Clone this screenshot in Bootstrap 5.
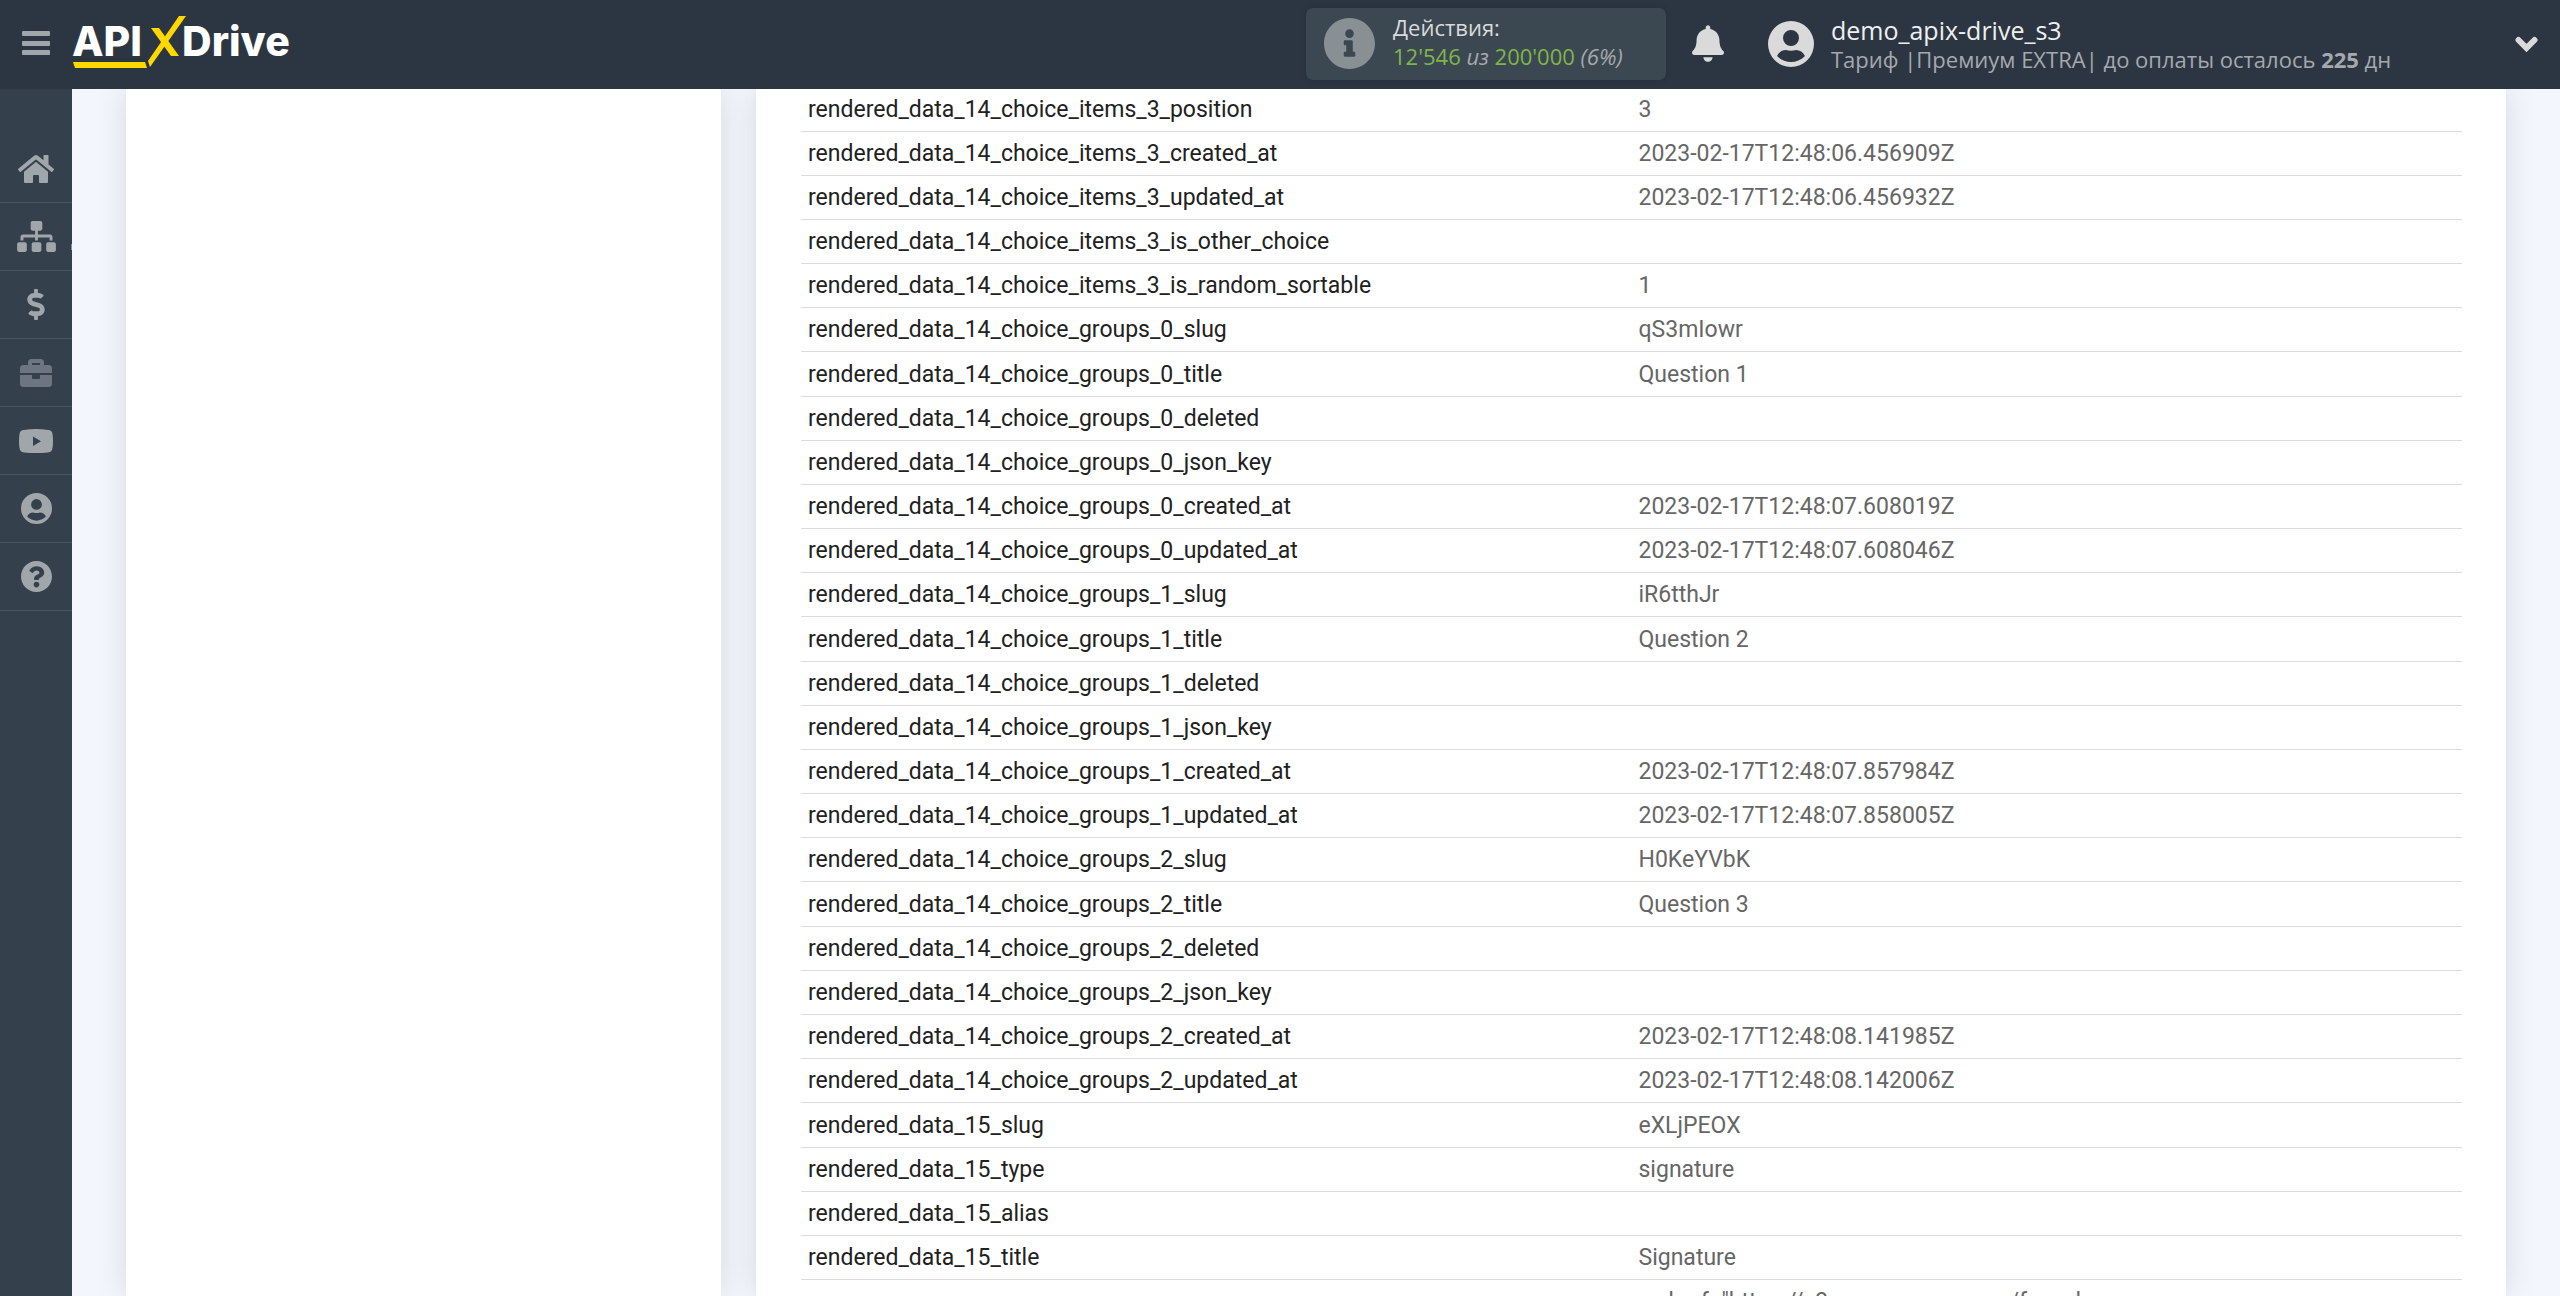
<!DOCTYPE html>
<html lang="ru">
<head>
<meta charset="utf-8">
<meta name="viewport" content="width=device-width, initial-scale=1">
<title>ApiX-Drive</title>
<link rel="stylesheet" href="https://cdn.jsdelivr.net/npm/bootstrap@5.3.0/dist/css/bootstrap.min.css">
<style>
  body { background: #f3f6fc; font-family: Roboto, "Liberation Sans", sans-serif; }
  svg { display: block; fill: currentColor; }

  /* top bar */
  .topbar { height: 89px; padding: 0 22px 2px; background: #2c3642; font-family: "Open Sans", "Noto Sans", sans-serif; color: #dadada; }
  .menu-toggle { color: #a1a6aa; }
  .brand-logo { margin-left: 22px; }
  .brand-logo text { font: 800 41px Inter, "Open Sans", sans-serif; fill: #fff; }
  .quota { width: 360px; height: 72px; padding: 0 18px; gap: 18px; border-radius: 7px; background: #3b4851; box-shadow: 0 0 6px rgba(0, 0, 0, .15); }
  .quota-icon { color: #889093; }
  .line-one, .line-two { font-size: 22px; line-height: 29px; white-space: nowrap; }
  .line-two { color: #a5a9ad; }
  .line-two .num { color: #7fb54c; font-style: normal; }
  .bell-btn { margin: 0 44px 0 26px; color: #dadada; }
  .account { width: 770px; gap: 17px; color: #dadada; text-align: left; }
  .account-name { font-size: 25px; line-height: 30px; color: #efefef; }
  .account .line-two { line-height: 28px; }

  /* side menu */
  .sidebar { width: 72px; padding-top: 46px; background: #35404d; }
  .side-link { height: 68px; border-bottom: 1px solid #4a5560; color: #a1a6aa; position: relative; }
  .side-link.is-muted { color: #6d7680; }
  .has-submenu::after { content: ""; position: absolute; right: 0; top: 41px; width: 1px; height: 6px; background: #8b929a; }

  /* content */
  .content { padding: 0 54px; gap: 35px; }
  .panel { background: #fff; box-shadow: 0 0 30px rgba(0, 0, 0, .12); }
  .panel-side { flex: 0 0 25%; }
  .panel-main { padding: 0 44px 0 45px; }
  .data-rows { table-layout: fixed; border-collapse: separate; border-spacing: 0; font-size: 23px; line-height: 28px; }
  .data-rows th, .data-rows td { padding: 8px 7px 7px; border-bottom: 1px solid #dcdcdc; font-weight: 400; text-align: left; vertical-align: top; white-space: nowrap; }
  .data-rows th { color: #212121; }
  .data-rows td { color: #666; }
  .data-rows tr { height: 44px; }
  .data-rows tr.lead-row { height: 45px; }
  .data-rows tr.lead-row > * { padding-top: 9px; }
  .data-rows tr:first-child { height: 43px; }
  .data-rows tr:first-child > * { padding-top: 7px; }
</style>
<script src="https://cdn.jsdelivr.net/npm/bootstrap@5.3.0/dist/js/bootstrap.bundle.min.js"></script>
</head>
<body>
<div class="vh-100 d-flex flex-column overflow-hidden">

  <header class="topbar d-flex align-items-center flex-shrink-0">
    <button class="menu-toggle btn p-0 border-0" type="button" aria-label="Меню">
      <svg width="28" height="28" viewBox="0 0 28 28"><rect y="1" width="28" height="5" rx="1"/><rect y="11" width="28" height="5" rx="1"/><rect y="20" width="28" height="5" rx="1"/></svg>
    </button>
    <a class="brand-logo" href="#" aria-label="APIXDrive">
      <svg width="226" height="60" viewBox="0 0 226 60">
        <text x="0" y="42">API</text>
        <text x="110" y="42">Drive</text>
        <g fill="#ffd800"><path d="M1 48h72l2 6H3z"/><path d="M107 2h7L78 53l-2-6z"/><path d="M79 14h8l20 28h-8z"/></g>
      </svg>
    </a>

    <div class="quota d-flex align-items-center ms-auto">
      <svg class="quota-icon" width="51" height="51" viewBox="8 8 496 496"><path d="M256 8C119.043 8 8 119.083 8 256c0 136.997 111.043 248 248 248s248-111.003 248-248C504 119.083 392.957 8 256 8zm0 110c23.196 0 42 18.804 42 42s-18.804 42-42 42-42-18.804-42-42 18.804-42 42-42zm56 254c0 6.627-5.373 12-12 12h-88c-6.627 0-12-5.373-12-12v-24c0-6.627 5.373-12 12-12h12v-64h-12c-6.627 0-12-5.373-12-12v-24c0-6.627 5.373-12 12-12h64c6.627 0 12 5.373 12 12v100h12c6.627 0 12 5.373 12 12v24z"/></svg>
      <div class="pb-1">
        <div class="line-one">Действия:</div>
        <div class="line-two fst-italic"><span class="num">12'546</span> из <span class="num">200'000</span> (6%)</div>
      </div>
    </div>
    <button class="bell-btn btn p-0 border-0" type="button" aria-label="Уведомления">
      <svg width="32" height="37" viewBox="0 0 448 512"><path d="M224 512c35.32 0 63.97-28.65 63.97-64H160.03c0 35.35 28.65 64 63.97 64zm215.39-149.71c-19.32-20.76-55.47-51.99-55.47-154.29 0-77.7-54.48-139.9-127.94-155.16V32c0-17.67-14.32-32-31.98-32s-31.98 14.33-31.98 32v20.84C118.56 68.1 64.08 130.3 64.08 208c0 102.3-36.15 133.53-55.47 154.29-6 6.45-8.66 14.16-8.61 21.71.11 16.4 12.98 32 32.1 32h383.8c19.12 0 32-15.6 32.1-32 .05-7.55-2.61-15.27-8.61-21.71z"/></svg>
    </button>
    <button class="account btn p-0 border-0 rounded-0 d-flex align-items-center" type="button">
      <svg width="46" height="46" viewBox="0 0 46 46"><path fill-rule="evenodd" d="M23 0a23 23 0 1 1 0 46a23 23 0 1 1 0-46zM23 9a8 8 0 1 0 0 16a8 8 0 1 0 0-16zM9 35C13 39 18 41 23 41S33 39 37 35C35 31 32 29 28 29C25 30 21 30 18 29C14 29 11 31 9 35z"/></svg>
      <span class="flex-grow-1">
        <span class="account-name d-block">demo_apix-drive_s3</span>
        <span class="line-two d-block">Тариф |Премиум EXTRA| до оплаты осталось <b>225</b> дн</span>
      </span>
      <svg width="23" height="16" viewBox="0 0 23 16"><path d="M3.500 4l8 8 8-8" fill="none" stroke="currentColor" stroke-width="6" stroke-linecap="round"/></svg>
    </button>
  </header>

  <div class="d-flex flex-grow-1 overflow-hidden">
    <nav class="sidebar flex-shrink-0 d-flex flex-column" aria-label="Разделы">
      <a class="side-link d-flex align-items-center justify-content-center" href="#" aria-label="Главная">
        <svg width="36" height="32" viewBox="0 0 576 512"><path d="M280.370 148.260L96 300.110V464a16 16 0 0 0 16 16l112.060-.29a16 16 0 0 0 15.920-16V368a16 16 0 0 1 16-16h64a16 16 0 0 1 16 16v95.640a16 16 0 0 0 16 16.050L464 480a16 16 0 0 0 16-16V300L295.670 148.260a12.190 12.190 0 0 0-15.300 0zM571.600 251.470L488 182.560V44.050a12 12 0 0 0-12-12h-56a12 12 0 0 0-12 12v72.610L318.470 43a48 48 0 0 0-61 0L4.340 251.470a12 12 0 0 0-1.600 16.900l25.500 31A12 12 0 0 0 45.150 301l235.220-193.740a12.190 12.190 0 0 1 15.300 0L530.900 301a12 12 0 0 0 16.900-1.600l25.500-31a12 12 0 0 0-1.700-16.930z"/></svg>
      </a>
      <a class="side-link has-submenu d-flex align-items-center justify-content-center" href="#" aria-label="Связи">
        <svg width="39" height="31" viewBox="0 0 640 512"><path d="M128 352H32c-17.670 0-32 14.330-32 32v96c0 17.670 14.330 32 32 32h96c17.670 0 32-14.330 32-32v-96c0-17.670-14.330-32-32-32zm-24-80h192v48h48v-48h192v48h48v-57.590c0-21.170-17.230-38.410-38.410-38.410H344v-64h40c17.670 0 32-14.330 32-32V32c0-17.670-14.330-32-32-32H256c-17.670 0-32 14.330-32 32v96c0 17.670 14.330 32 32 32h40v64H94.410C73.230 224 56 241.230 56 262.410V320h48v-48zm264 80h-96c-17.670 0-32 14.330-32 32v96c0 17.670 14.330 32 32 32h96c17.670 0 32-14.330 32-32v-96c0-17.670-14.330-32-32-32zm240 0h-96c-17.670 0-32 14.330-32 32v96c0 17.670 14.330 32 32 32h96c17.670 0 32-14.330 32-32v-96c0-17.670-14.330-32-32-32z"/></svg>
      </a>
      <a class="side-link d-flex align-items-center justify-content-center" href="#" aria-label="Оплата">
        <svg width="18" height="31" viewBox="0 0 288 512"><path d="M209.200 233.400l-108-31.600C88.700 198.200 80 186.500 80 173.500c0-16.300 13.200-29.500 29.500-29.500h66.300c12.200 0 24.200 3.700 34.200 10.500 6.100 4.100 14.300 3.100 19.500-2l34.800-34c7.100-6.900 6.100-18.400-1.800-24.500C238 74.800 207.400 64.100 176 64V16c0-8.800-7.200-16-16-16h-32c-8.800 0-16 7.200-16 16v48h-2.500C45.800 64-5.400 118.700.5 183.600c4.200 46.100 39.400 83.600 83.800 96.600l102.500 30c12.500 3.700 21.200 15.300 21.200 28.300 0 16.300-13.200 29.500-29.500 29.500h-66.300C100 368 88 364.300 78 357.500c-6.100-4.100-14.300-3.100-19.500 2l-34.800 34c-7.100 6.900-6.100 18.400 1.800 24.500 24.500 19.200 55.100 29.900 86.500 30v48c0 8.800 7.200 16 16 16h32c8.800 0 16-7.200 16-16v-48.200c46.600-.9 90.300-28.600 105.700-72.700 21.500-61.600-14.600-124.800-72.500-141.700z"/></svg>
      </a>
      <a class="side-link is-muted d-flex align-items-center justify-content-center" href="#" aria-label="Проекты">
        <svg width="32" height="32" viewBox="0 0 512 512"><path d="M320 336c0 8.840-7.160 16-16 16h-96c-8.840 0-16-7.160-16-16v-48H0v144c0 25.600 22.400 48 48 48h416c25.600 0 48-22.400 48-48V288H320v48zm144-208h-80V80c0-25.600-22.400-48-48-48H176c-25.600 0-48 22.400-48 48v48H48c-25.600 0-48 22.400-48 48v80h512v-80c0-25.600-22.400-48-48-48zm-144 0H192V96h128v32z"/></svg>
      </a>
      <a class="side-link d-flex align-items-center justify-content-center" href="#" aria-label="Видео">
        <svg width="34" height="24" viewBox="0 0 34 24"><path fill-rule="evenodd" d="M5 1Q17-1 29 1Q33 1 33.500 5Q34.500 12 33.500 19Q33 23 29 23.500Q17 24.500 5 23.500Q1 23 .5 19Q-.5 12 .5 5Q1 1 5 1zM14 7.500v9.500l8-4.700z"/></svg>
      </a>
      <a class="side-link d-flex align-items-center justify-content-center" href="#" aria-label="Профиль">
        <svg width="31" height="31" viewBox="0 0 46 46"><path fill-rule="evenodd" d="M23 0a23 23 0 1 1 0 46a23 23 0 1 1 0-46zM23 9a8 8 0 1 0 0 16a8 8 0 1 0 0-16zM9 35C13 39 18 41 23 41S33 39 37 35C35 31 32 29 28 29C25 30 21 30 18 29C14 29 11 31 9 35z"/></svg>
      </a>
      <a class="side-link d-flex align-items-center justify-content-center" href="#" aria-label="Помощь">
        <svg width="31" height="31" viewBox="8 8 496 496"><path d="M504 256c0 136.997-111.043 248-248 248S8 392.997 8 256C8 119.083 119.043 8 256 8s248 111.083 248 248zM262.655 90c-54.497 0-89.255 22.957-116.549 63.758-3.536 5.286-2.353 12.415 2.715 16.258l34.699 26.310c5.205 3.947 12.621 3.008 16.665-2.122 17.864-22.658 30.113-35.797 57.303-35.797 20.429 0 45.698 13.148 45.698 32.958 0 14.976-12.363 22.667-32.534 33.976C247.128 238.528 216 254.941 216 296v4c0 6.627 5.373 12 12 12h56c6.627 0 12-5.373 12-12v-1.333c0-28.462 83.186-29.647 83.186-106.667 0-58.002-60.165-102-116.531-102zM256 338c-25.365 0-46 20.635-46 46 0 25.364 20.635 46 46 46s46-20.636 46-46c0-25.365-20.635-46-46-46z"/></svg>
      </a>
    </nav>

    <main class="content d-flex flex-grow-1 overflow-hidden">
      <aside class="panel panel-side"></aside>
      <section class="panel panel-main flex-grow-1">
        <table class="data-rows w-100">
          <tbody>
            <tr><th scope="row">rendered_data_14_choice_items_3_position</th><td>3</td></tr>
            <tr><th scope="row">rendered_data_14_choice_items_3_created_at</th><td>2023-02-17T12:48:06.456909Z</td></tr>
            <tr><th scope="row">rendered_data_14_choice_items_3_updated_at</th><td>2023-02-17T12:48:06.456932Z</td></tr>
            <tr><th scope="row">rendered_data_14_choice_items_3_is_other_choice</th><td></td></tr>
            <tr><th scope="row">rendered_data_14_choice_items_3_is_random_sortable</th><td>1</td></tr>
            <tr><th scope="row">rendered_data_14_choice_groups_0_slug</th><td>qS3mIowr</td></tr>
            <tr class="lead-row"><th scope="row">rendered_data_14_choice_groups_0_title</th><td>Question 1</td></tr>
            <tr><th scope="row">rendered_data_14_choice_groups_0_deleted</th><td></td></tr>
            <tr><th scope="row">rendered_data_14_choice_groups_0_json_key</th><td></td></tr>
            <tr><th scope="row">rendered_data_14_choice_groups_0_created_at</th><td>2023-02-17T12:48:07.608019Z</td></tr>
            <tr><th scope="row">rendered_data_14_choice_groups_0_updated_at</th><td>2023-02-17T12:48:07.608046Z</td></tr>
            <tr><th scope="row">rendered_data_14_choice_groups_1_slug</th><td>iR6tthJr</td></tr>
            <tr class="lead-row"><th scope="row">rendered_data_14_choice_groups_1_title</th><td>Question 2</td></tr>
            <tr><th scope="row">rendered_data_14_choice_groups_1_deleted</th><td></td></tr>
            <tr><th scope="row">rendered_data_14_choice_groups_1_json_key</th><td></td></tr>
            <tr><th scope="row">rendered_data_14_choice_groups_1_created_at</th><td>2023-02-17T12:48:07.857984Z</td></tr>
            <tr><th scope="row">rendered_data_14_choice_groups_1_updated_at</th><td>2023-02-17T12:48:07.858005Z</td></tr>
            <tr><th scope="row">rendered_data_14_choice_groups_2_slug</th><td>H0KeYVbK</td></tr>
            <tr class="lead-row"><th scope="row">rendered_data_14_choice_groups_2_title</th><td>Question 3</td></tr>
            <tr><th scope="row">rendered_data_14_choice_groups_2_deleted</th><td></td></tr>
            <tr><th scope="row">rendered_data_14_choice_groups_2_json_key</th><td></td></tr>
            <tr><th scope="row">rendered_data_14_choice_groups_2_created_at</th><td>2023-02-17T12:48:08.141985Z</td></tr>
            <tr><th scope="row">rendered_data_14_choice_groups_2_updated_at</th><td>2023-02-17T12:48:08.142006Z</td></tr>
            <tr class="lead-row"><th scope="row">rendered_data_15_slug</th><td>eXLjPEOX</td></tr>
            <tr><th scope="row">rendered_data_15_type</th><td>signature</td></tr>
            <tr><th scope="row">rendered_data_15_alias</th><td></td></tr>
            <tr><th scope="row">rendered_data_15_title</th><td>Signature</td></tr>
            <tr><th scope="row"></th><td>&lt;a href="https://s3.amazonaws.com/formd</td></tr>
          </tbody>
        </table>
      </section>
    </main>
  </div>
</div>
</body>
</html>
